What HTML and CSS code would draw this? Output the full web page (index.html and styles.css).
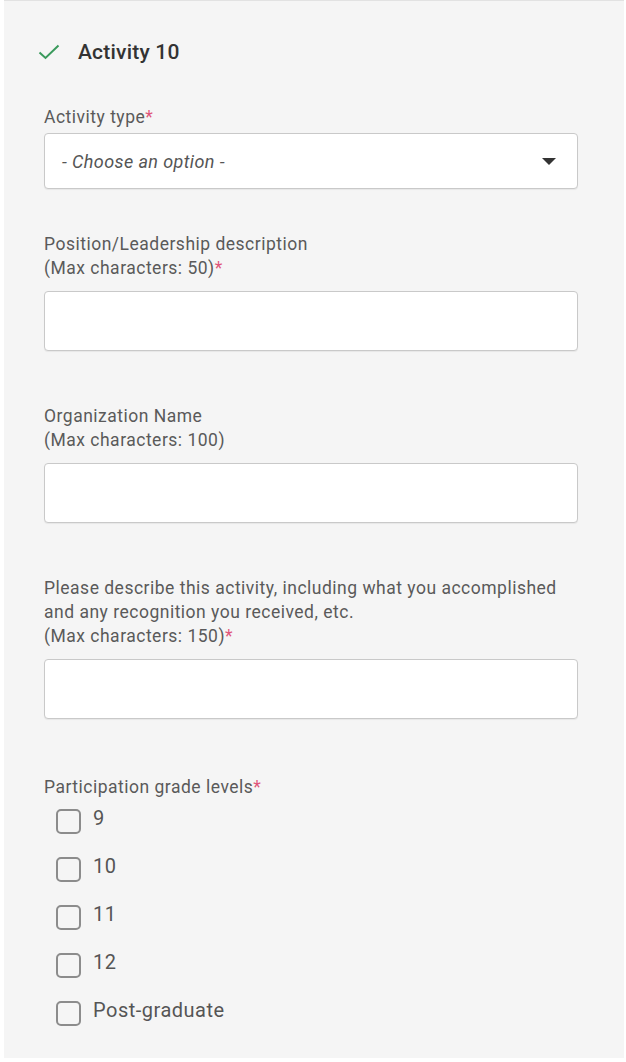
FILE: index.html
```html
<!DOCTYPE html>
<html>
<head>
<meta charset="utf-8">
<link rel="stylesheet" href="styles.css">
</head>
<body>
<div class="panel">
  <div class="heading">
    <svg class="check" width="22" height="16" viewBox="0 0 22 16"><path d="M1.5 8.5 L7.5 14 L20.5 1.5" fill="none" stroke="#3a9a5c" stroke-width="2"/></svg>
    <span class="heading-text">Activity 10</span>
  </div>

  <div class="field field-select">
    <label class="label">Activity type<span class="req">*</span></label>
    <div class="select">
      <span class="placeholder">- Choose an option -</span>
      <span class="arrow"></span>
    </div>
  </div>

  <div class="field field-first">
    <label class="label">Position/Leadership description<br>(Max characters: 50)<span class="req">*</span></label>
    <div class="input"></div>
  </div>

  <div class="field">
    <label class="label">Organization Name<br>(Max characters: 100)</label>
    <div class="input"></div>
  </div>

  <div class="field">
    <label class="label">Please describe this activity, including what you accomplished<br>and any recognition you received, etc.<br>(Max characters: 150)<span class="req">*</span></label>
    <div class="input"></div>
  </div>

  <div class="field field-checks">
    <label class="label">Participation grade levels<span class="req">*</span></label>
    <div class="checks">
      <div class="check-row"><span class="box"></span><span class="check-label">9</span></div>
      <div class="check-row"><span class="box"></span><span class="check-label">10</span></div>
      <div class="check-row"><span class="box"></span><span class="check-label">11</span></div>
      <div class="check-row"><span class="box"></span><span class="check-label">12</span></div>
      <div class="check-row"><span class="box"></span><span class="check-label">Post-graduate</span></div>
    </div>
  </div>
</div>
</body>
</html>
```

FILE: styles.css
```css
html, body {
  margin: 0;
  padding: 0;
  background: #ffffff;
}
body {
  font-family: Roboto, "Liberation Sans", Arial, sans-serif;
  color: #555;
}
.panel {
  margin-left: 4px;
  width: 620px;
  height: 1058px;
  box-sizing: border-box;
  border-top: 1px solid #e2e2e2;
  background: #f5f5f5;
  padding: 39px 46px 0 40px;
}
.heading {
  display: flex;
  align-items: center;
  height: 24px;
  margin-left: -6px;
}
.check {
  display: block;
  margin-right: 18px;
}
.heading-text {
  font-size: 21px;
  font-weight: 500;
  color: #333;
  letter-spacing: 0.2px;
}
.field {
  margin-top: 53px;
}
.field-select {
  margin-top: 41px;
}
.field-first {
  margin-top: 43px;
}
.field-checks {
  margin-top: 56px;
}
.label {
  display: block;
  font-size: 17.5px;
  letter-spacing: 0.5px;
  line-height: 24px;
  color: #5a5a5a;
  margin-bottom: 11px;
}
.field-select .label {
  margin-bottom: 4px;
}
.req {
  color: #e0557a;
}
.select {
  height: 56px;
  box-sizing: border-box;
  background: #fff;
  border: 1px solid #c9c9c9;
  border-radius: 4px;
  box-shadow: 0 1px 1px rgba(0,0,0,0.06);
  display: flex;
  align-items: center;
  justify-content: space-between;
  padding: 0 21px 0 17px;
}
.placeholder {
  font-style: italic;
  font-size: 18px;
  letter-spacing: 0.4px;
  color: #555;
}
.arrow {
  width: 0;
  height: 0;
  border-left: 7px solid transparent;
  border-right: 7px solid transparent;
  border-top: 7px solid #333;
}
.input {
  height: 60px;
  box-sizing: border-box;
  background: #fff;
  border: 1px solid #c9c9c9;
  border-radius: 4px;
  box-shadow: 0 1px 1px rgba(0,0,0,0.06);
}
.checks {
  display: flex;
  flex-direction: column;
  margin-top: -13px;
}
.check-row {
  display: flex;
  align-items: center;
  height: 48px;
  padding-left: 12px;
}
.box {
  width: 25px;
  height: 25px;
  box-sizing: border-box;
  border: 2px solid #8c8c8c;
  border-radius: 5px;
  margin-right: 12px;
}
.check-label {
  font-size: 20px;
  letter-spacing: 0.5px;
  color: #555;
  position: relative;
  top: -3px;
}
```
